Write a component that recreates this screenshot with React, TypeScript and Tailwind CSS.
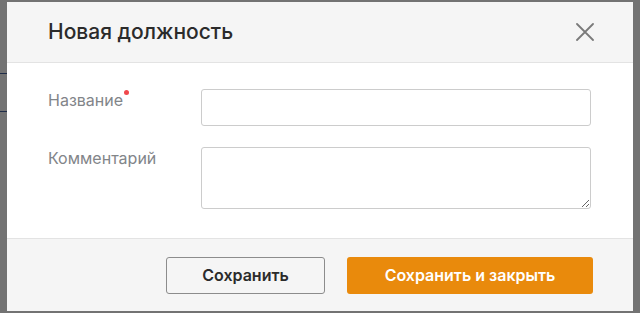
function App() {
  return (
    <div className="flex h-[313px] w-[640px] overflow-hidden bg-[#737373]" style={{ fontFamily: 'Inter, "Liberation Sans", sans-serif' }}>
      <div className="flex w-[7px] shrink-0 flex-col">
        <div className="h-[73px]" />
        <div className="h-[1px] bg-[#1f2c48]" />
        <div className="h-[37px]" />
        <div className="h-[1px] bg-[#1f2c48]" />
      </div>
      <div className="mt-[2px] flex h-[309px] w-[626px] shrink-0 flex-col bg-white">
        <div className="flex h-[61px] items-center justify-between border-b border-[#e3e3e3] bg-[#f5f5f5] pl-[41px] pr-[39px]">
          <h1 className="text-[21px] font-medium text-[#2b2b2b]">Новая должность</h1>
          <button type="button" className="text-[#7a7a7a]">
            <svg width="18" height="18" viewBox="0 0 18 18" fill="none" stroke="currentColor" strokeWidth="1.8" strokeLinecap="round">
              <path d="M1 1L17 17M17 1L1 17" />
            </svg>
          </button>
        </div>
        <div className="flex flex-1 flex-col gap-[21px] pl-[41px] pr-[36px] pt-[26px]">
          <div className="flex items-start">
            <label className="relative w-[153px] text-[16px] leading-[22px] text-[#828589]">
              Название
              <span className="absolute top-[1px] ml-[1px] inline-block h-[5px] w-[5px] rounded-full bg-[#f0484d]" />
            </label>
            <input className="h-[37px] w-[390px] rounded-[3px] border border-[#cccccc] bg-white px-3 outline-none" />
          </div>
          <div className="flex items-start">
            <label className="w-[153px] text-[16px] leading-[22px] text-[#828589]">Комментарий</label>
            <textarea className="h-[62px] w-[390px] rounded-[3px] border border-[#cccccc] bg-white px-3 outline-none" />
          </div>
        </div>
        <div className="flex h-[73px] items-center justify-end gap-[22px] border-t border-[#e3e3e3] bg-[#f5f5f5] pr-[40px]">
          <button type="button" className="h-[37px] w-[159px] rounded-[3px] border border-[#8c8c8c] bg-[#f5f5f5] text-[16px] font-semibold text-[#2b2b2b]">
            Сохранить
          </button>
          <button type="button" className="h-[37px] w-[246px] rounded-[3px] bg-[#e98a0c] text-[16px] font-semibold text-white">
            Сохранить и закрыть
          </button>
        </div>
      </div>
      <div className="flex-1" />
    </div>
  )
}

export default App
